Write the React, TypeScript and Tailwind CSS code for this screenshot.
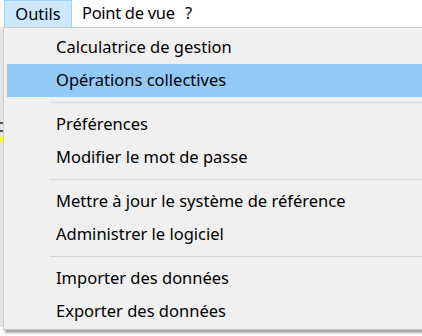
import React from 'react'

const groups: string[][] = [
  ['Calculatrice de gestion', 'Opérations collectives'],
  ['Préférences', 'Modifier le mot de passe'],
  ['Mettre à jour le système de référence', 'Administrer le logiciel'],
  ['Importer des données', 'Exporter des données'],
]

const App = () => {
  return (
    <div
      className="relative w-[422px] h-[336px] overflow-hidden bg-white text-black text-[16.5px] whitespace-nowrap"
      style={{ fontFamily: '"Noto Sans", "Open Sans", sans-serif' }}
    >
      {/* menu bar */}
      <div className="flex items-stretch h-[27px] pl-[4px] bg-white">
        <div className="flex shrink-0 items-center justify-center w-[68px] bg-[#cce8ff] border border-[#99d1ff] border-b-0">
          Outils
        </div>
        <div className="flex shrink-0 items-center w-[113px] pl-[10px] tracking-[-0.3px]">Point de vue</div>
        <div className="flex shrink-0 items-center">?</div>
      </div>

      {/* app content peeking out on the left */}
      <div className="absolute left-0 top-[27px] w-[3px] h-[300px] bg-[#e4e4e4]">
        <div className="mt-[95px] h-[2px] bg-[#555]" />
        <div className="mt-[6px] h-[2px] bg-[#555]" />
        <div className="mt-[5px] h-[5px] bg-[#ffff00]" />
      </div>

      {/* dropdown */}
      <div className="absolute left-[3px] top-[27px] w-[440px] bg-[#f0f0f0] border border-[#cccccc] pt-[3px] pb-[1px] shadow-[2px_3px_2px_rgba(0,0,0,0.35)]">
        {groups.map((items, gi) => (
          <div key={gi}>
            {gi > 0 && (
              <div className="h-[11px] flex items-center pl-[46px]">
                <div className="h-px w-full bg-[#d7d7d7]" />
              </div>
            )}
            {items.map((label) => (
              <div
                key={label}
                className={
                  label === 'Opérations collectives'
                    ? 'h-[33px] flex items-center ml-[3px] pl-[49px] bg-[#91c9f7]'
                    : 'h-[33px] flex items-center ml-[3px] pl-[49px]'
                }
              >
                {label}
              </div>
            ))}
          </div>
        ))}
      </div>
    </div>
  )
}

export default App
